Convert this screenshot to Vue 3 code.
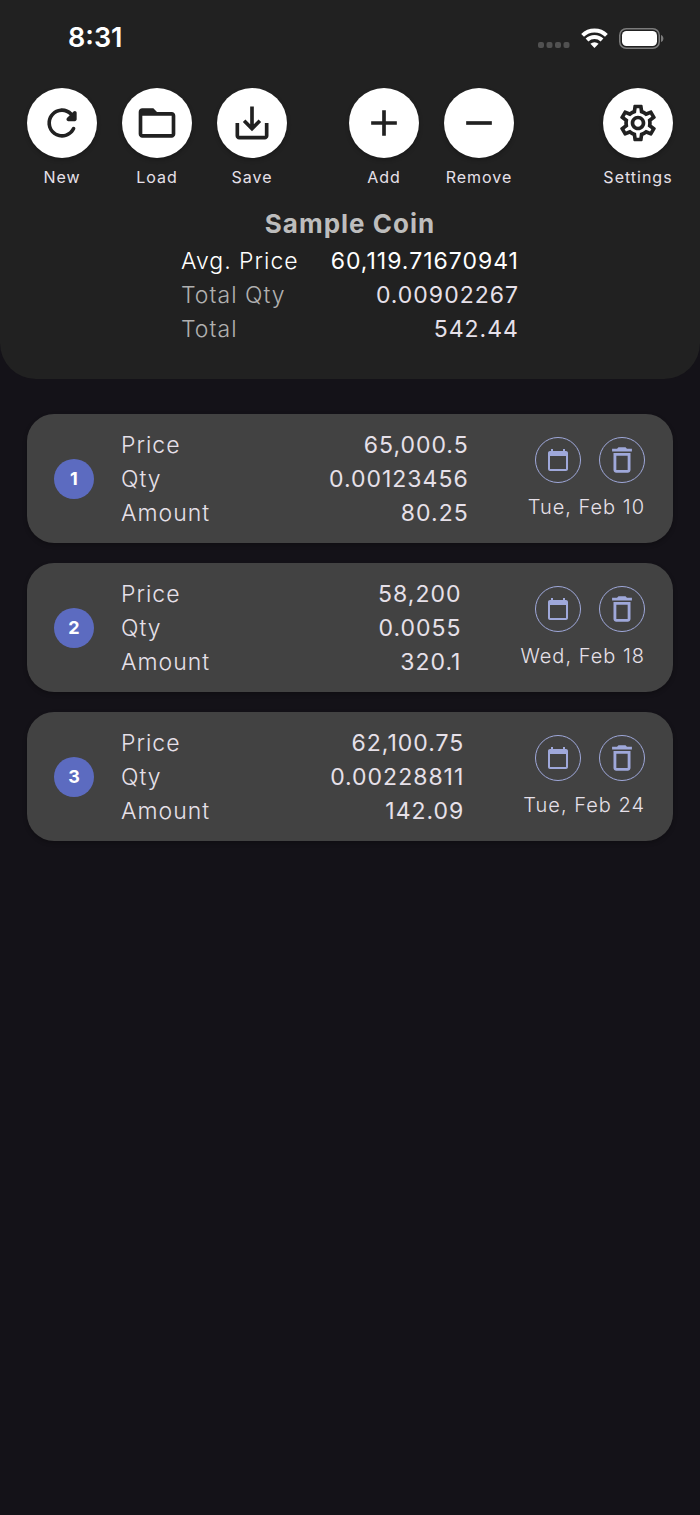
<script setup>
import { ref, computed } from 'vue'

const icons = {
  refresh:
    'M17.65 6.35c-1.63-1.63-3.94-2.57-6.48-2.31-3.67.37-6.69 3.35-7.1 7.02C3.52 15.91 7.27 20 12 20c3.19 0 5.93-1.87 7.21-4.56.32-.67-.16-1.44-.9-1.44-.37 0-.72.2-.88.53-1.13 2.43-3.84 3.97-6.8 3.31-2.22-.49-4.01-2.3-4.48-4.52C5.31 9.44 8.26 6 12 6c1.66 0 3.14.69 4.22 1.78l-1.51 1.51c-.63.63-.19 1.71.7 1.71H19c.55 0 1-.45 1-1V6.41c0-.89-1.08-1.34-1.71-.71l-.64.65z',
  folder:
    'M20 6h-8l-2-2H4c-1.1 0-1.99.9-1.99 2L2 18c0 1.1.9 2 2 2h16c1.1 0 2-.9 2-2V8c0-1.1-.9-2-2-2zm0 12H4V8h16v10z',
  save: 'M19 12v7H5v-7H3v7c0 1.1.9 2 2 2h14c1.1 0 2-.9 2-2v-7h-2zm-6 .67l2.59-2.58L17 11.5l-5 5-5-5 1.41-1.41L11 12.67V3h2v9.67z',
  add: 'M19 13h-6v6h-2v-6H5v-2h6V5h2v6h6v2z',
  remove: 'M19 13H5v-2h14v2z',
  settings:
    'M19.43 12.98c.04-.32.07-.64.07-.98s-.03-.66-.07-.98l2.11-1.65c.19-.15.24-.42.12-.64l-2-3.46c-.09-.16-.26-.25-.44-.25-.06 0-.12.01-.17.03l-2.49 1c-.52-.4-1.08-.73-1.69-.98l-.38-2.65C14.46 2.18 14.25 2 14 2h-4c-.25 0-.46.18-.49.42l-.38 2.65c-.61.25-1.17.59-1.69.98l-2.49-1c-.06-.02-.12-.03-.18-.03-.17 0-.34.09-.43.25l-2 3.46c-.13.22-.07.49.12.64l2.11 1.65c-.04.32-.07.65-.07.98s.03.66.07.98l-2.11 1.65c-.19.15-.24.42-.12.64l2 3.46c.09.16.26.25.44.25.06 0 .12-.01.17-.03l2.49-1c.52.4 1.08.73 1.69.98l.38 2.65c.03.24.24.42.49.42h4c.25 0 .46-.18.49-.42l.38-2.65c.61-.25 1.17-.59 1.69-.98l2.49 1c.06.02.12.03.18.03.17 0 .34-.09.43-.25l2-3.46c.12-.22.07-.49-.12-.64l-2.11-1.65zm-1.98-1.71c.04.31.05.52.05.73s-.02.43-.05.73l-.14 1.13.89.7 1.08.84-.7 1.21-1.27-.51-1.04-.42-.9.68c-.43.32-.84.56-1.25.73l-1.06.43-.16 1.13-.2 1.35h-1.4l-.19-1.35-.16-1.13-1.06-.43c-.43-.18-.83-.41-1.23-.71l-.91-.7-1.06.43-1.27.51-.7-1.21 1.08-.84.89-.7-.14-1.13c-.03-.31-.05-.54-.05-.74s.02-.43.05-.73l.14-1.13-.89-.7-1.08-.84.7-1.21 1.27.51 1.04.42.9-.68c.43-.32.84-.56 1.25-.73l1.06-.43.16-1.13.2-1.35h1.39l.19 1.35.16 1.13 1.06.43c.43.18.83.41 1.23.71l.91.7 1.06-.43 1.27-.51.7 1.21-1.07.85-.89.7.14 1.13zM12 8c-2.21 0-4 1.79-4 4s1.79 4 4 4 4-1.79 4-4-1.79-4-4-4zm0 6c-1.1 0-2-.9-2-2s.9-2 2-2 2 .9 2 2-.9 2-2 2z',
  calendar:
    'M20 3h-1V1h-2v2H7V1H5v2H4c-1.1 0-2 .9-2 2v16c0 1.1.9 2 2 2h16c1.1 0 2-.9 2-2V5c0-1.1-.9-2-2-2zm0 18H4V8h16v13z',
  trash:
    'M16 9v10H8V9h8m-1.5-6h-5l-1 1H5v2h14V4h-3.5l-1-1zM18 7H6v12c0 1.1.9 2 2 2h8c1.1 0 2-.9 2-2V7z',
}

const toolGroups = [
  [
    { label: 'New', icon: 'refresh' },
    { label: 'Load', icon: 'folder' },
    { label: 'Save', icon: 'save' },
  ],
  [
    { label: 'Add', icon: 'add' },
    { label: 'Remove', icon: 'remove' },
  ],
  [{ label: 'Settings', icon: 'settings' }],
]

const entries = ref([
  { id: 1, price: 65000.5, qty: '0.00123456', amount: '80.25', date: 'Tue, Feb 10' },
  { id: 2, price: 58200, qty: '0.0055', amount: '320.1', date: 'Wed, Feb 18' },
  { id: 3, price: 62100.75, qty: '0.00228811', amount: '142.09', date: 'Tue, Feb 24' },
])

const rows = computed(() =>
  entries.value.map((e) => ({ ...e, price: e.price.toLocaleString('en-US') }))
)
</script>

<template>
  <div class="screen">
    <header class="top">
      <div class="status">
        <span class="time">8:31</span>
        <div class="status-icons">
          <svg class="signal" viewBox="0 0 32 6" aria-hidden="true">
            <rect x="0" y="0" width="6" height="6" rx="2" />
            <rect x="8.5" y="0" width="6" height="6" rx="2" />
            <rect x="17" y="0" width="6" height="6" rx="2" />
            <rect x="25.5" y="0" width="6" height="6" rx="2" />
          </svg>
          <svg class="wifi" viewBox="0 0 27 20" aria-hidden="true">
            <path d="M1.600 7.400a17 17 0 0 1 23.800 0" />
            <path d="M6 12a10.800 10.800 0 0 1 15 0" />
            <path class="wifi-dot" d="M13.500 20l-4.100-4.200a6 6 0 0 1 8.200 0z" />
          </svg>
          <svg class="battery" viewBox="0 0 45 21" aria-hidden="true">
            <rect class="shell" x="0.75" y="0.75" width="39.5" height="19.5" rx="6.5" />
            <rect class="charge" x="3" y="3" width="35" height="15" rx="4.5" />
            <path class="tip" d="M42 7c3.200 1 3.200 6 0 7z" />
          </svg>
        </div>
      </div>

      <nav class="toolbar" aria-label="Actions">
        <div v-for="(group, i) in toolGroups" :key="i" class="tool-group">
          <button v-for="tool in group" :key="tool.label" type="button" class="tool">
            <span class="disc">
              <svg viewBox="0 0 24 24" aria-hidden="true"><path :d="icons[tool.icon]" /></svg>
            </span>
            <span class="tool-label">{{ tool.label }}</span>
          </button>
        </div>
      </nav>

      <section class="summary">
        <h1>Sample Coin</h1>
        <dl>
          <dt class="strong">Avg. Price</dt>
          <dd class="strong">60,119.71670941</dd>
          <dt>Total Qty</dt>
          <dd>0.00902267</dd>
          <dt>Total</dt>
          <dd>542.44</dd>
        </dl>
      </section>
    </header>

    <main class="list">
      <article v-for="row in rows" :key="row.id" class="card">
        <span class="badge">{{ row.id }}</span>
        <dl class="figures">
          <dt>Price</dt>
          <dd>{{ row.price }}</dd>
          <dt>Qty</dt>
          <dd>{{ row.qty }}</dd>
          <dt>Amount</dt>
          <dd>{{ row.amount }}</dd>
        </dl>
        <div class="side">
          <div class="actions">
            <button type="button" class="round" aria-label="Change date">
              <svg class="calendar" viewBox="0 0 24 24" aria-hidden="true">
                <path :d="icons.calendar" />
              </svg>
            </button>
            <button type="button" class="round" aria-label="Delete entry">
              <svg class="trash" viewBox="0 0 24 24" aria-hidden="true">
                <path :d="icons.trash" />
              </svg>
            </button>
          </div>
          <time>{{ row.date }}</time>
        </div>
      </article>
    </main>
  </div>
</template>

<style>
body {
  margin: 0;
  background: #141218;
}
</style>

<style scoped>
.screen {
  min-height: 100vh;
  background: #141218;
  color: #e6e0e9;
  font-family: Inter, "Liberation Sans", sans-serif;
  font-size: 23px;
  line-height: 34px;
  letter-spacing: 1px;
}

.top {
  background: #212121;
  border-radius: 0 0 36px 36px;
  padding-bottom: 33px;
}

.status {
  display: flex;
  align-items: center;
  justify-content: space-between;
  height: 76px;
  padding: 0 36px 0 68px;
}

.time {
  color: #fff;
  font-size: 27px;
  font-weight: 600;
  letter-spacing: normal;
}

.status-icons {
  display: flex;
  align-items: center;
  gap: 11px;
}

.status-icons svg {
  display: block;
}

.signal {
  width: 32px;
  height: 6px;
  margin-top: 14px;
  fill: #515151;
}

.wifi {
  width: 27px;
  height: 20px;
  fill: none;
  stroke: #fff;
  stroke-width: 4px;
}

.wifi-dot {
  fill: #fff;
  stroke: none;
}

.battery {
  width: 45px;
  height: 21px;
}

.shell {
  fill: none;
  stroke: #7b7b7b;
  stroke-width: 1.5px;
}

.charge {
  fill: #fff;
}

.tip {
  fill: #7b7b7b;
}

.toolbar {
  display: flex;
  justify-content: space-between;
  padding: 12px 27px 0;
}

.tool-group {
  display: flex;
  gap: 25px;
}

.tool-group:nth-child(2) {
  margin-right: 27px;
}

button {
  border: 0;
  padding: 0;
  background: none;
  color: inherit;
  font: inherit;
  letter-spacing: inherit;
  cursor: pointer;
}

.tool {
  display: flex;
  flex-direction: column;
  align-items: center;
  gap: 8px;
  width: 70px;
}

.disc {
  display: flex;
  align-items: center;
  justify-content: center;
  width: 70px;
  height: 70px;
  border-radius: 50%;
  background: #fff;
  box-shadow: 0 2px 4px rgba(0, 0, 0, 0.25);
}

.disc svg {
  width: 44px;
  height: 44px;
  fill: #212121;
}

.tool-label {
  font-size: 16px;
  line-height: 22px;
}

.summary {
  display: flex;
  flex-direction: column;
  align-items: center;
  gap: 2px;
  padding-top: 18px;
}

h1 {
  margin: 0;
  color: #bdbdbd;
  font-size: 26px;
  font-weight: 700;
  line-height: 36px;
}

dl,
dd {
  margin: 0;
}

dt {
  font-weight: 300;
}

dd {
  text-align: right;
}

.summary dl {
  display: grid;
  grid-template-columns: auto auto;
  column-gap: 32px;
}

.summary dt {
  color: #b0b0b0;
}

.summary .strong {
  color: #fff;
}

.list {
  display: flex;
  flex-direction: column;
  gap: 20px;
  padding: 35px 27px;
}

.card {
  display: flex;
  align-items: center;
  padding: 14px 28px 13px 27px;
  border-radius: 27px;
  background: #424242;
  box-shadow: 0 2px 4px rgba(0, 0, 0, 0.25);
}

.badge {
  width: 40px;
  border-radius: 50%;
  background: #5c6bc0;
  color: #fff;
  font-size: 18px;
  font-weight: 700;
  line-height: 40px;
  letter-spacing: normal;
  text-align: center;
}

.figures {
  flex: 1;
  display: grid;
  grid-template-columns: auto 1fr;
  margin: 0 59px 0 27px;
}

.side {
  display: flex;
  flex-direction: column;
  align-items: flex-end;
  gap: 9px;
}

.actions {
  display: flex;
  gap: 18px;
}

.round {
  display: flex;
  align-items: center;
  justify-content: center;
  width: 46px;
  height: 46px;
  border: 1px solid #9fa8da;
  border-radius: 50%;
}

.round svg {
  flex: none;
  fill: #9fa8da;
}

.calendar {
  width: 24px;
  height: 24px;
}

.trash {
  width: 34px;
  height: 34px;
}

time {
  font-size: 20px;
  font-weight: 300;
  line-height: 30px;
}
</style>
